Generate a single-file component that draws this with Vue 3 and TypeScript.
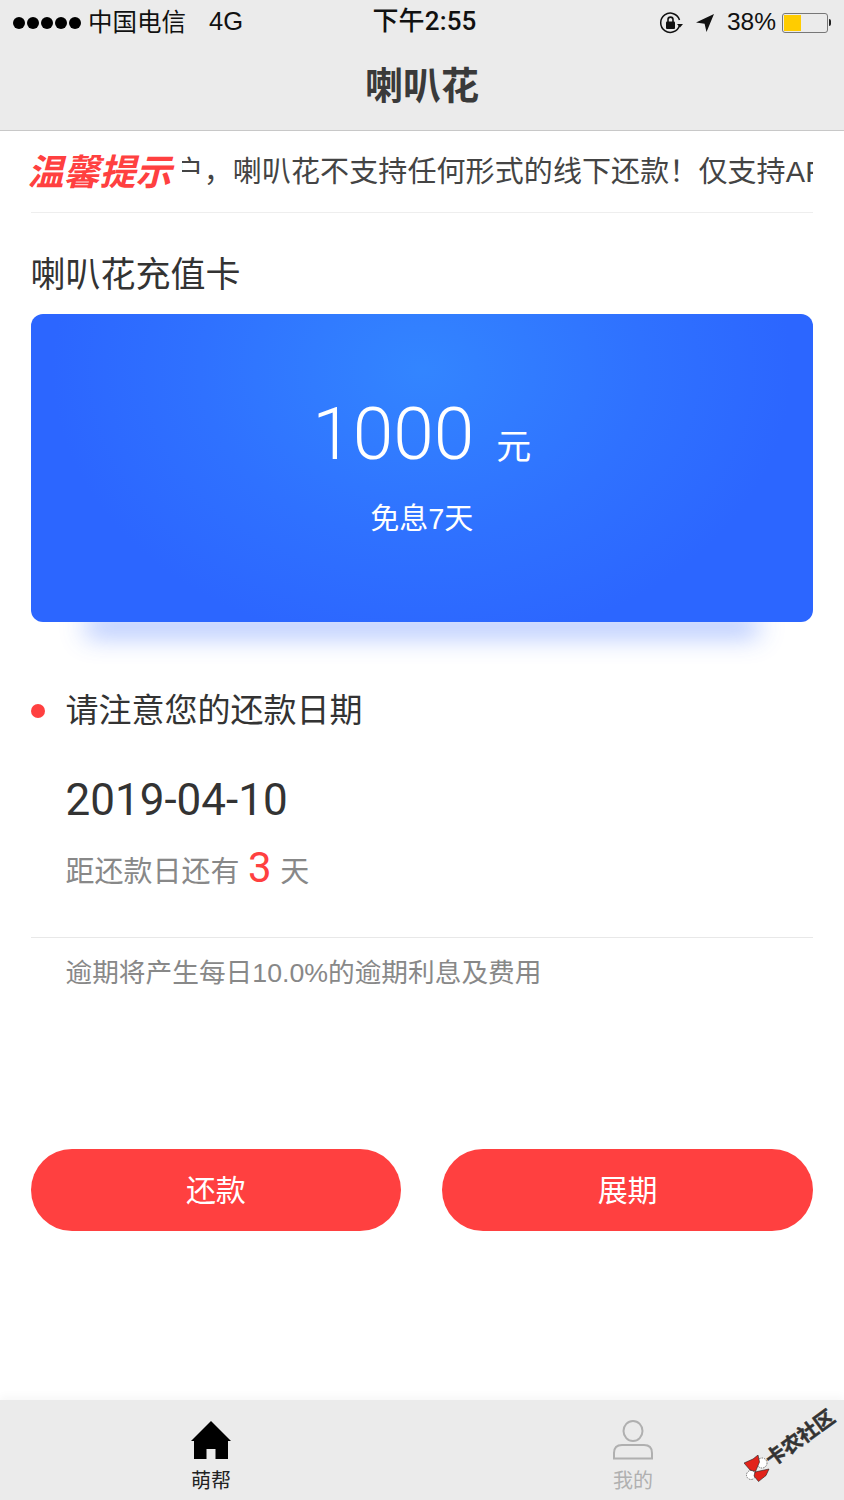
<template>
  <div class="page">
    <header class="top">
      <div class="status">
        <div class="status-left">
          <span class="dots"><i v-for="n in 5" :key="n"></i></span>
          <span class="carrier">中国电信</span>
          <span class="net">4G</span>
        </div>
        <div class="clock">下午2:55</div>
        <div class="status-right">
          <svg class="lock" width="24" height="24" viewBox="0 0 24 24">
            <path d="M20.5 14.5A9.6 9.6 0 1 1 20.5 9" fill="none" stroke="#111" stroke-width="1.5" />
            <path d="M18 13h6l-3 3.6z" fill="#111" />
            <rect x="7" y="10.5" width="9" height="7.5" rx="1" fill="#111" />
            <path d="M9 11V8.6a2.5 2.5 0 0 1 5 0V11" fill="none" stroke="#111" stroke-width="1.6" />
          </svg>
          <svg class="arrow" width="20" height="20" viewBox="0 0 20 20">
            <path d="M19 1 1 9.5l8.6 1.2L11.5 19z" fill="#111" />
          </svg>
          <span class="pct">38%</span>
          <span class="battery"><span class="level"></span></span>
          <span class="nub"></span>
        </div>
      </div>
      <div class="nav-title">喇叭花</div>
    </header>

    <main class="content">
      <div class="notice">
        <span class="notice-tag">温馨提示</span>
        <div class="notice-clip">
          <span class="notice-text">用户，喇叭花不支持任何形式的线下还款！仅支持APP内还款</span>
        </div>
      </div>

      <h2 class="section-title">喇叭花充值卡</h2>
      <div class="card-wrap">
        <div class="card">
          <div class="amount"><span class="num">1000</span><span class="unit">元</span></div>
          <div class="free">免息7天</div>
        </div>
      </div>

      <div class="tip-row">
        <span class="red-dot"></span>
        <span>请注意您的还款日期</span>
      </div>
      <div class="date">2019-04-10</div>
      <div class="remain">距还款日还有<span class="days">3</span>天</div>
      <div class="overdue">逾期将产生每日10.0%的逾期利息及费用</div>

      <div class="actions">
        <button class="btn"><span>还款</span></button>
        <button class="btn"><span>展期</span></button>
      </div>
    </main>

    <footer class="tabbar">
      <div class="tab active">
        <svg width="42" height="40" viewBox="0 0 42 40">
          <path d="M21 1 41 21h-3v18H25.500V29h-9v10H4V21H1z" fill="#000" />
        </svg>
        <span>萌帮</span>
      </div>
      <div class="tab">
        <svg width="42" height="40" viewBox="0 0 42 40">
          <ellipse cx="21" cy="11" rx="9.5" ry="10" fill="none" stroke="#b0b0b0" stroke-width="2" />
          <path d="M2 38.5V33c0-5 3-8 8-8h22c5 0 8 3 8 8v5.500z" fill="none" stroke="#b0b0b0" stroke-width="2" />
        </svg>
        <span>我的</span>
      </div>
      <svg class="wm-bow" width="26" height="28" viewBox="0 0 26 28">
        <circle cx="18" cy="8" r="5" fill="#fff" stroke="#444" stroke-width=".7" stroke-dasharray="1.500 1" />
        <circle cx="7" cy="20" r="4.500" fill="#fff" stroke="#444" stroke-width=".7" stroke-dasharray="1.500 1" />
        <path d="M0 8 9 4 14 0l1.500 7-4 9.500L6 15z" fill="#e2231a" stroke="#222" stroke-width=".6" />
        <path d="M11 17 25 14l-3 6.500L14.500 26.500 10 21z" fill="#e2231a" stroke="#222" stroke-width=".6" />
      </svg>
      <span class="wm-text">卡农社区</span>
    </footer>
  </div>
</template>

<script setup lang="ts">
</script>

<style>
html,
body {
  margin: 0;
  background: #fff;
}
</style>

<style scoped>
.page {
  width: 844px;
  height: 1500px;
  display: flex;
  flex-direction: column;
  background: #fff;
  color: #333;
  font-family: "Liberation Sans", "Noto Sans CJK SC", sans-serif;
  overflow: hidden;
}

.top {
  height: 130px;
  flex: none;
  background: #ebebeb;
  border-bottom: 1px solid #c8c8c8;
}

.status {
  height: 44px;
  padding: 0 13px;
  display: grid;
  grid-template-columns: 1fr auto 1fr;
  align-items: center;
  color: #111;
  font-size: 24.5px;
}

.status-left,
.status-right {
  display: flex;
  align-items: center;
}

.status-right {
  justify-content: flex-end;
}

.dots {
  display: flex;
  gap: 2px;
  margin-right: 7px;
}

.dots i {
  width: 12px;
  height: 12px;
  border-radius: 50%;
  background: #000;
}

.carrier {
  padding-bottom: 4px;
}

.net {
  margin-left: 23px;
  padding-bottom: 2px;
  font-size: 25.5px;
}

.clock {
  margin-left: 5px;
  padding-bottom: 8px;
  font-family: Roboto, "Noto Sans CJK SC", sans-serif;
  font-size: 26px;
  font-weight: 500;
  letter-spacing: 0.15px;
}

.lock {
  margin-right: 12px;
}

.arrow {
  margin-right: 12px;
}

.pct {
  margin-right: 6px;
  padding-bottom: 2px;
}

.battery {
  width: 46px;
  height: 20px;
  box-sizing: border-box;
  border: 1px solid #777;
  border-radius: 3px;
  padding: 1px;
  display: block;
}

.level {
  display: block;
  width: 17px;
  height: 100%;
  background: #ffcc00;
}

.nub {
  width: 2px;
  height: 7px;
  margin-left: 1px;
  background: #222;
  border-radius: 0 2px 2px 0;
}

.nav-title {
  height: 85px;
  line-height: 85px;
  text-align: center;
  font-size: 38px;
  font-weight: 700;
  color: #3a3a3a;
}

.content {
  flex: 1;
  padding: 0 31px 0 30.5px;
}

.notice {
  height: 82px;
  box-sizing: border-box;
  padding-bottom: 6px;
  display: flex;
  align-items: center;
  border-bottom: 1px solid #eeeeee;
}

.notice-tag {
  width: 151px;
  margin-left: -3px;
  margin-right: 3px;
  flex: none;
  font-size: 36px;
  font-weight: 700;
  font-style: italic;
  color: #ff4040;
}

.notice-clip {
  flex: 1;
  overflow: hidden;
  white-space: nowrap;
  font-size: 29px;
  letter-spacing: 0.1px;
  color: #444;
}

.notice-text {
  display: inline-block;
  margin-left: -36px;
}

.section-title {
  margin: 41px 0 18px;
  font-size: 35px;
  line-height: 42px;
  font-weight: 400;
  color: #333;
}

.card-wrap {
  position: relative;
}

.card-wrap::after {
  content: "";
  position: absolute;
  left: 55px;
  right: 55px;
  bottom: 0;
  height: 20px;
  box-shadow: 0 14px 26px rgba(45, 100, 255, 0.42);
}

.card {
  position: relative;
  z-index: 1;
  height: 308px;
  box-sizing: border-box;
  padding-top: 76px;
  border-radius: 12px;
  background: radial-gradient(ellipse 370px 280px at 50% 18%, #3385ff 0%, #2f71ff 60%, #2c66ff 100%);
  color: #fff;
  text-align: center;
}

.amount {
  display: flex;
  justify-content: center;
  align-items: baseline;
  gap: 22px;
  height: 88px;
  line-height: 88px;
}

.num {
  font-family: Roboto, "Liberation Sans", sans-serif;
  font-weight: 300;
  font-size: 73px;
}

.unit {
  font-size: 35px;
}

.free {
  margin-top: 23px;
  font-size: 29px;
  line-height: 36px;
}

.tip-row {
  margin-top: 68px;
  display: flex;
  align-items: center;
  gap: 21px;
  font-size: 33px;
  line-height: 42px;
  color: #333;
}

.red-dot {
  width: 14px;
  height: 14px;
  border-radius: 50%;
  background: #ff4040;
}

.date {
  margin: 43px 0 0 35px;
  font-family: Roboto, "Liberation Sans", sans-serif;
  font-size: 44px;
  line-height: 50px;
  color: #333;
}

.remain {
  margin: 13px 0 0 35px;
  height: 60px;
  line-height: 60px;
  font-size: 29px;
  color: #888;
}

.days {
  margin: 0 8.5px;
  font-family: Roboto, "Liberation Sans", sans-serif;
  font-size: 42px;
  color: #ff4040;
}

.overdue {
  margin-top: 39px;
  padding: 18px 0 0 35px;
  border-top: 1px solid #e8e8e8;
  font-size: 26.7px;
  line-height: 34px;
  color: #888;
}

.actions {
  margin-top: 159px;
  display: flex;
  gap: 41px;
}

.btn {
  flex: 1;
  height: 82px;
  padding: 0 0 5px;
  border: 0;
  border-radius: 41px;
  background: #ff4040;
  color: #fff;
  font-family: inherit;
  font-size: 30px;
}

.tabbar {
  position: relative;
  height: 100px;
  flex: none;
  display: flex;
  background: #ebebeb;
  box-shadow: 0 -4px 8px rgba(0, 0, 0, 0.03);
}

.tab {
  width: 50%;
  display: flex;
  flex-direction: column;
  align-items: center;
  padding-top: 20px;
  box-sizing: border-box;
  font-size: 20px;
  line-height: 26px;
  color: #b0b0b0;
}

.tab.active {
  color: #222;
}

.tab span {
  margin-top: 8px;
}

.wm-bow {
  position: absolute;
  left: 744px;
  top: 55px;
}

.wm-text {
  position: absolute;
  left: 800px;
  top: 38px;
  transform: translate(-50%, -50%) rotate(-36deg);
  font-size: 20px;
  line-height: 24px;
  font-weight: 700;
  -webkit-text-stroke: 0.5px #333;
  color: #333;
  white-space: nowrap;
}
</style>
